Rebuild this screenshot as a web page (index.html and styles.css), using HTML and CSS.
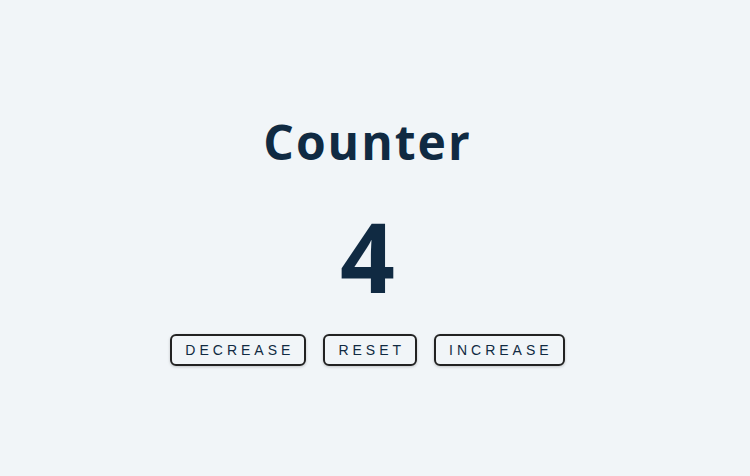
FILE: index.html
```html
<!DOCTYPE html>
<html>
<head>
<meta charset="utf-8">
<link rel="stylesheet" href="styles.css">
</head>
<body>
<main class="container">
  <h1 class="title">Counter</h1>
  <span class="value">4</span>
  <div class="buttons">
    <button class="btn">decrease</button>
    <button class="btn">reset</button>
    <button class="btn">increase</button>
  </div>
</main>
</body>
</html>
```
FILE: styles.css
```css
html, body {
  margin: 0;
  padding: 0;
  background: #f1f5f8;
  color: #102a42;
}
body {
  font-family: "Open Sans", sans-serif;
  min-height: 476px;
}
.container {
  display: flex;
  flex-direction: column;
  align-items: center;
  padding-top: 113px;
  padding-right: 15px;
}
.title {
  margin: 0;
  font-size: 48px;
  font-weight: 700;
  letter-spacing: 2px;
  line-height: 1.2;
}
.value {
  font-size: 96px;
  font-weight: 700;
  line-height: 1.2;
  margin-top: 27px;
}
.buttons {
  display: flex;
  gap: 17px;
  margin-top: 21px;
}
.btn {
  font-family: "Liberation Sans", Arial, sans-serif;
  text-transform: uppercase;
  background: transparent;
  color: #102a42;
  border: 2px solid #222;
  border-radius: 6px;
  letter-spacing: 4px;
  font-size: 14px;
  line-height: 16px;
  padding: 6px 10px 6px 13px;
  box-shadow: 0 1px 3px rgba(0,0,0,0.2);
}
```
